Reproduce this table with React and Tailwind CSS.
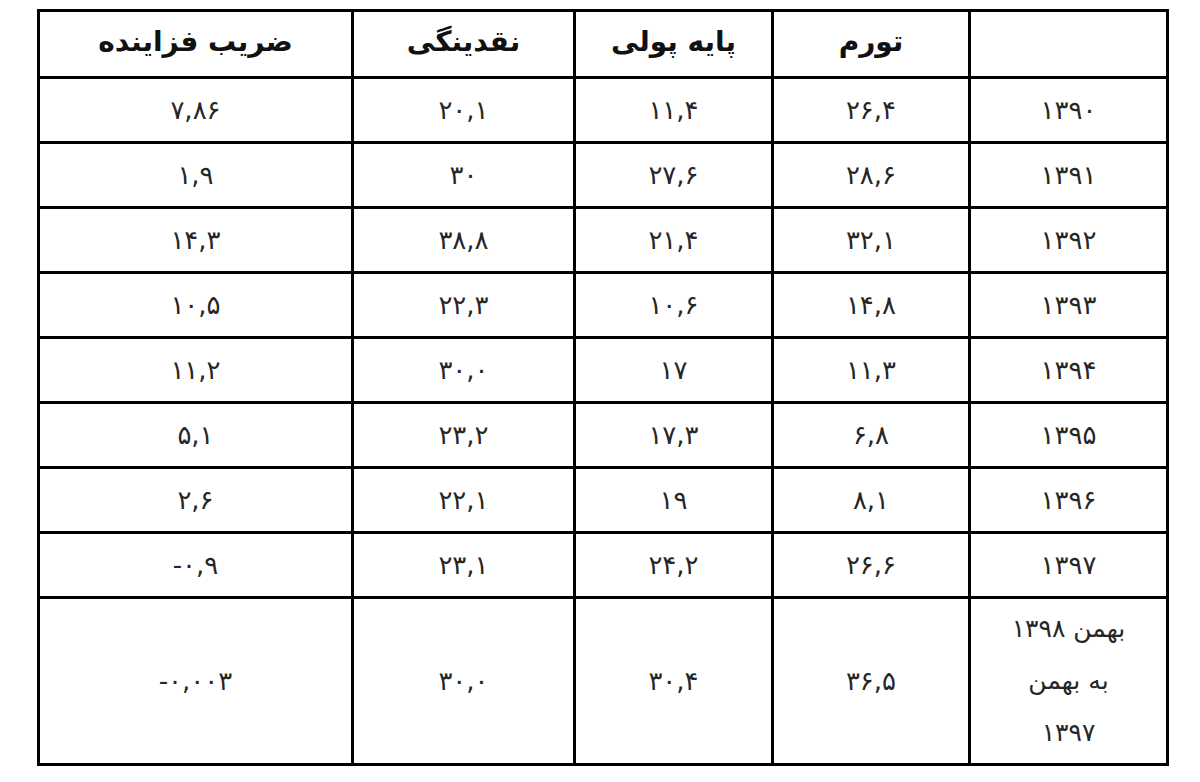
const headers = ['', 'تورم', 'پایه پولی', 'نقدینگی', 'ضریب فزاینده'];

const rows = [
    ['۱۳۹۰', '۲۶,۴', '۱۱,۴', '۲۰,۱', '۷,۸۶'],
    ['۱۳۹۱', '۲۸,۶', '۲۷,۶', '۳۰', '۱,۹'],
    ['۱۳۹۲', '۳۲,۱', '۲۱,۴', '۳۸,۸', '۱۴,۳'],
    ['۱۳۹۳', '۱۴,۸', '۱۰,۶', '۲۲,۳', '۱۰,۵'],
    ['۱۳۹۴', '۱۱,۳', '۱۷', '۳۰,۰', '۱۱,۲'],
    ['۱۳۹۵', '۶,۸', '۱۷,۳', '۲۳,۲', '۵,۱'],
    ['۱۳۹۶', '۸,۱', '۱۹', '۲۲,۱', '۲,۶'],
    ['۱۳۹۷', '۲۶,۶', '۲۴,۲', '۲۳,۱', '-۰,۹'],
];

const lastRow = ['۳۶,۵', '۳۰,۴', '۳۰,۰', '-۰,۰۰۳'];

const widths = ['w-[198px]', 'w-[197px]', 'w-[198px]', 'w-[222px]', 'w-[314px]'];

const App = () => {
    return (
        <div className="min-h-screen bg-white pt-[9px] pl-[37px]" style={{ fontFamily: '"DejaVu Sans", sans-serif' }}>
            <table dir="rtl" className="table-fixed border-collapse w-[1130px] border-[3px] border-black">
                <colgroup>
                    {widths.map((w, i) => <col key={i} className={w} />)}
                </colgroup>
                <thead>
                    <tr className="h-[67px]">
                        {headers.map((h, i) => (
                            <th key={i} className="border-[3px] border-black text-center text-[28px] font-bold text-[#111] pb-1">
                                {h}
                            </th>
                        ))}
                    </tr>
                </thead>
                <tbody>
                    {rows.map((r, ri) => (
                        <tr key={ri} className="h-[65px]">
                            {r.map((c, ci) => (
                                <td key={ci} className="border-[3px] border-black text-center text-[26px] text-[#262626]">
                                    <span dir="ltr">{c}</span>
                                </td>
                            ))}
                        </tr>
                    ))}
                    <tr className="h-[167px]">
                        <td className="border-[3px] border-black text-center text-[25px] leading-[52px] text-[#262626]">
                            بهمن ۱۳۹۸<br />به بهمن<br />۱۳۹۷
                        </td>
                        {lastRow.map((c, ci) => (
                            <td key={ci} className="border-[3px] border-black text-center text-[26px] text-[#262626]">
                                <span dir="ltr">{c}</span>
                            </td>
                        ))}
                    </tr>
                </tbody>
            </table>
        </div>
    );
};

export default App;
